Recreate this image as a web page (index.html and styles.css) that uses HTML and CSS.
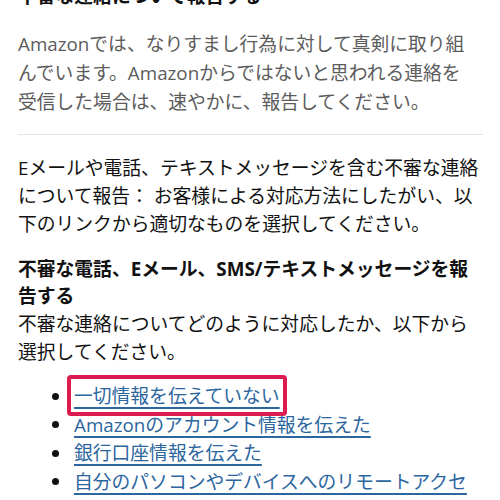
FILE: index.html
```html
<!DOCTYPE html>
<html lang="ja">
<head>
<meta charset="utf-8">
<link rel="stylesheet" href="styles.css">
</head>
<body>
<main class="page">
  <h2 class="title">不審な連絡について報告する</h2>
  <p class="lead">Amazonでは、なりすまし行為に対して真剣に取り組んでいます。Amazonからではないと思われる連絡を<span class="keep">受信</span>した場合は、速やかに、報告してください。</p>
  <hr class="divider">
  <p class="body-text">Eメールや電話、テキストメッセージを含む不審な連絡について報告： お客様による対応方法にしたがい、以下のリンクから適切なものを選択してください。</p>
  <section class="report">
    <h3 class="report-title">不審な電話、Eメール、SMS/テキストメッセージを報告する</h3>
    <p class="body-text tight">不審な連絡についてどのように対応したか、以下から選択してください。</p>
    <ul class="links">
      <li><a href="#" class="link highlighted">一切情報を伝えていない</a></li>
      <li><a href="#" class="link">Amazonのアカウント情報を伝えた</a></li>
      <li><a href="#" class="link">銀行口座情報を伝えた</a></li>
      <li><a href="#" class="link">自分のパソコンやデバイスへのリモートアクセ</a></li>
    </ul>
  </section>
</main>
</body>
</html>
```

FILE: styles.css
```css
html, body {
  margin: 0;
  padding: 0;
  background: #ffffff;
}

body {
  font-family: "Open Sans", "Noto Sans CJK JP", sans-serif;
  font-size: 18.8px;
  line-height: 28px;
  color: #111111;
  overflow: hidden;
  height: 500px;
}

.page {
  padding: 0 17px 0 18px;
  margin-top: -18px;
}

.keep {
  white-space: nowrap;
}

.title {
  margin: 0;
  font-size: 18.8px;
  line-height: 28px;
  font-weight: 700;
  color: #111111;
}

.lead {
  margin: 20px 0 0;
  line-height: 29px;
  color: #5c5c5c;
}

.divider {
  margin: 17px 0 0;
  border: 0;
  height: 1px;
  background: #e3e3e3;
}

.body-text {
  margin: 19px 0 0;
  color: #111111;
}

.report {
  margin-top: 18px;
}

.report-title {
  margin: 0;
  font-size: 18.8px;
  line-height: 27px;
  font-weight: 700;
  color: #111111;
}

.body-text.tight {
  margin-top: 0;
}

.links {
  list-style: none;
  margin: 16px 0 0;
  padding: 0 0 0 34px;
}

.links li {
  display: flex;
  align-items: center;
  gap: 15px;
  height: 28.5px;
}

.links li::before {
  content: "";
  flex: none;
  width: 7px;
  height: 7px;
  border-radius: 50%;
  background: #111111;
}

.link {
  color: #2b669e;
  text-decoration: underline;
  text-decoration-thickness: 1.5px;
  text-underline-offset: 4px;
  white-space: nowrap;
}

.highlighted {
  position: relative;
  display: inline-block;
  line-height: 28px;
}

.highlighted::after {
  content: "";
  position: absolute;
  top: -7px;
  left: -7px;
  right: -7px;
  bottom: -6px;
  border: 4px solid #dc1c4e;
  border-radius: 4px;
  pointer-events: none;
}
```
